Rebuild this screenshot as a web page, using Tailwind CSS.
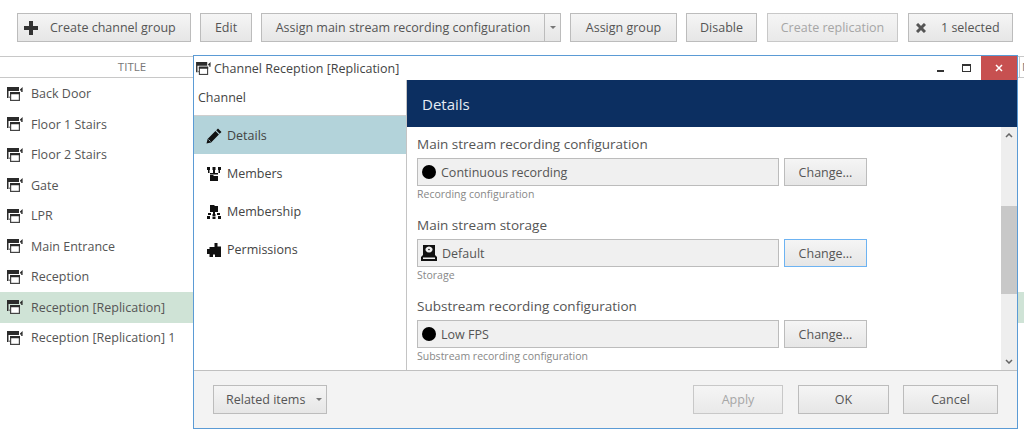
<!DOCTYPE html>
<html lang="en">
<head>
  <meta charset="UTF-8" />
  <title>Channel Reception [Replication]</title>
  <script src="https://cdn.jsdelivr.net/npm/@tailwindcss/browser@4"></script>
</head>
<body class="relative w-[1024px] h-[436px] overflow-hidden bg-white font-['Open_Sans',sans-serif] text-[12.500px] text-[#555]">
  <svg class="hidden">
    <symbol id="channel" viewBox="0 0 16 14">
      <path fill="#2b2b2b" d="M0 0h12v4H0zM0 4h1.500v7H0z" />
      <path fill="#888" d="M1.500 9.500h2v1.500h-2z" />
      <rect x="3.600" y="5.600" width="8.800" height="7.800" fill="#fff" stroke="#444" stroke-width="1.200" />
      <path fill="#2b2b2b" d="M3 5h10v2.200H3zM13 2.500L15.600 0v5h-1.400V3.200l-1.200.6z" />
    </symbol>
  </svg>

  <!-- Toolbar -->
  <div class="flex h-[56px] pt-[13px] pl-[17px]">
    <button class="flex items-center h-[29px] w-[174px] mr-[9px] border border-[#bcbcbc] bg-gradient-to-b from-[#f5f5f5] to-[#e6e6e6]">
      <svg class="ml-[6px] w-[14px] h-[14px]" viewBox="0 0 14 14"><path fill="#333" d="M5 0h4v5h5v4H9v5H5V9H0V5h5z" /></svg>
      <span class="ml-[12px] pt-[2px] whitespace-nowrap">Create channel group</span>
    </button>
    <button class="h-[29px] w-[52px] mr-[9px] pt-[2px] border border-[#bcbcbc] bg-gradient-to-b from-[#f5f5f5] to-[#e6e6e6]">Edit</button>
    <div class="flex h-[29px] w-[300px] mr-[9px] border border-[#bcbcbc] bg-gradient-to-b from-[#f5f5f5] to-[#e6e6e6]">
      <button class="w-[283px] pt-[2px] whitespace-nowrap border-r border-[#bcbcbc]">Assign main stream recording configuration</button>
      <span class="flex flex-1 items-center justify-center"><span class="border-x-[3px] border-t-[3px] border-x-transparent border-t-[#777]"></span></span>
    </div>
    <button class="h-[29px] w-[107px] mr-[9px] pt-[2px] border border-[#bcbcbc] bg-gradient-to-b from-[#f5f5f5] to-[#e6e6e6]">Assign group</button>
    <button class="h-[29px] w-[71px] mr-[10px] pt-[2px] border border-[#bcbcbc] bg-gradient-to-b from-[#f5f5f5] to-[#e6e6e6]">Disable</button>
    <button class="h-[29px] w-[131px] mr-[10px] pt-[2px] border border-[#c8c8c8] bg-gradient-to-b from-[#f5f5f5] to-[#e9e9e9] text-[#a6a6a6] whitespace-nowrap">Create replication</button>
    <button class="flex items-center h-[29px] w-[105px] border border-[#bcbcbc] bg-gradient-to-b from-[#f5f5f5] to-[#e6e6e6]">
      <svg class="ml-[7px] w-[10px] h-[10px]" viewBox="0 0 10 10"><path stroke="#555" stroke-width="3" d="M1 1l8 8M9 1l-8 8" /></svg>
      <span class="ml-[15px] pt-[2px] whitespace-nowrap">1 selected</span>
    </button>
  </div>

  <!-- Channel table -->
  <div class="flex h-[22px] border-y border-[#c8c8c8] text-[11.500px] text-[#777]">
    <div class="w-[264px] text-center leading-[20px]">TITLE</div>
  </div>
  <ul class="pt-[0.500px]">
    <li class="flex items-center h-[30.500px] pl-[7px]"><svg class="w-[16px] h-[14px] mr-[8px]"><use href="#channel" /></svg><span class="pt-[2px]">Back Door</span></li>
    <li class="flex items-center h-[30.500px] pl-[7px]"><svg class="w-[16px] h-[14px] mr-[8px]"><use href="#channel" /></svg><span class="pt-[2px]">Floor 1 Stairs</span></li>
    <li class="flex items-center h-[30.500px] pl-[7px]"><svg class="w-[16px] h-[14px] mr-[8px]"><use href="#channel" /></svg><span class="pt-[2px]">Floor 2 Stairs</span></li>
    <li class="flex items-center h-[30.500px] pl-[7px]"><svg class="w-[16px] h-[14px] mr-[8px]"><use href="#channel" /></svg><span class="pt-[2px]">Gate</span></li>
    <li class="flex items-center h-[30.500px] pl-[7px]"><svg class="w-[16px] h-[14px] mr-[8px]"><use href="#channel" /></svg><span class="pt-[2px]">LPR</span></li>
    <li class="flex items-center h-[30.500px] pl-[7px]"><svg class="w-[16px] h-[14px] mr-[8px]"><use href="#channel" /></svg><span class="pt-[2px]">Main Entrance</span></li>
    <li class="flex items-center h-[30.500px] pl-[7px]"><svg class="w-[16px] h-[14px] mr-[8px]"><use href="#channel" /></svg><span class="pt-[2px]">Reception</span></li>
    <li class="flex items-center h-[30.500px] pl-[7px] bg-[#cfe3d6]"><svg class="w-[16px] h-[14px] mr-[8px]"><use href="#channel" /></svg><span class="pt-[2px]">Reception [Replication]</span></li>
    <li class="flex items-center h-[30.500px] pl-[7px]"><svg class="w-[16px] h-[14px] mr-[8px]"><use href="#channel" /></svg><span class="pt-[2px]">Reception [Replication] 1</span></li>
  </ul>

  <!-- Dialog -->
  <div class="absolute left-[193px] top-[55px] flex flex-col w-[825px] h-[374px] border border-[#5b9bd5] bg-white">
    <div class="flex items-center h-[24px] shrink-0 pl-[2px]">
      <svg class="w-[15px] h-[13px]"><use href="#channel" /></svg>
      <span class="ml-[3px] pt-[2px] text-[12.500px] text-[#444]">Channel Reception [Replication]</span>
      <div class="ml-auto flex items-center h-full">
        <span class="w-[7px] h-[2px] mt-[5px] mr-[18px] bg-[#333]"></span>
        <span class="w-[9px] h-[8px] mr-[10px] border border-t-2 border-[#333]"></span>
        <span class="flex items-center justify-center w-[36px] h-full bg-[#c75050]">
          <svg class="w-[8px] h-[8px]" viewBox="0 0 8 8"><path stroke="#fff" stroke-width="1.500" d="M1 1l6 6M7 1L1 7" /></svg>
        </span>
      </div>
    </div>

    <div class="flex flex-1 min-h-0">
      <!-- Sidebar -->
      <nav class="w-[213px] shrink-0 border-r border-[#c4c4c4] text-[#444]">
        <div class="h-[36px] pl-[4px] leading-[36px] border-b border-[#cfcfcf]">Channel</div>
        <div class="flex items-center h-[38px] pl-[12px] pt-[1px] bg-[#b3d3da]">
          <svg class="w-[16px] h-[16px] mr-[5px]" viewBox="0 0 16 16"><path fill="#111" d="M12 .5l3.500 3.500-1.800 1.800-3.500-3.500zM9.400 3.100l3.500 3.500-7.800 7.800-4.600 1.100 1.100-4.600z" /><path stroke="#b3d3da" stroke-width=".8" d="M2.500 11.500l2 2" /></svg><span class="pt-[2px]">Details</span>
        </div>
        <div class="flex items-center h-[38px] pl-[12px] pt-[1px]">
          <svg class="w-[16px] h-[16px] mr-[5px]" viewBox="0 0 16 16"><path fill="#111" d="M1 1h3v3H1zM6.500 1h3v3h-3zM12 1h3v3h-3zM2 4h1.500v3H2zM7 4h2v3H7zM12.500 4H14v3h-1.500zM4 7h8v1.500h-8zM4 9h3l1 1h4v5H4z" /></svg><span class="pt-[2px]">Members</span>
        </div>
        <div class="flex items-center h-[38px] pl-[12px] pt-[1px]">
          <svg class="w-[16px] h-[16px] mr-[5px]" viewBox="0 0 16 16"><path fill="#111" d="M4 1h4l1 1h3v6H4zM7 8h2v2H7zM2 9h3v2H2zM11 9h3v2h-3zM6.500 10h3v2.500h-3zM1 12h3v3H1zM6.500 13h3v2h-3zM12 12h3v3h-3z" /></svg><span class="pt-[2px]">Membership</span>
        </div>
        <div class="flex items-center h-[38px] pl-[12px] pt-[1px]">
          <svg class="w-[16px] h-[16px] mr-[5px]" viewBox="0 0 16 16"><path fill="#111" d="M8.500 1h3v3.500H15V15H9v-2.500H7V15H3.500v-3H1V7h2.500V5H8.500z" /></svg><span class="pt-[2px]">Permissions</span>
        </div>
      </nav>

      <!-- Details pane -->
      <div class="flex flex-col flex-1 min-w-0">
        <div class="h-[47px] shrink-0 bg-[#0c2f61] pl-[15px] text-[15px] leading-[49px] text-[#e6ecf4]">Details</div>
        <div class="flex flex-1 min-h-0">
          <div class="flex-1 pl-[10px] pt-[7px]">
            <section class="h-[81px]">
              <div class="h-[24px] text-[13.500px] leading-[20px]">Main stream recording configuration</div>
              <div class="flex gap-[5px]">
                <div class="flex items-center w-[362px] h-[28px] pl-[4px] border border-[#bcbcbc] bg-[#f0f0f0]"><span class="w-[14px] h-[14px] mr-[5px] rounded-full bg-black"></span><span class="pt-[2px]">Continuous recording</span></div>
                <button class="w-[83px] h-[28px] pt-[2px] border border-[#bcbcbc] bg-gradient-to-b from-[#f5f5f5] to-[#e6e6e6]">Change...</button>
              </div>
              <div class="text-[10.500px] leading-[16px] text-[#888]">Recording configuration</div>
            </section>
            <section class="h-[81px]">
              <div class="h-[24px] text-[13.500px] leading-[20px]">Main stream storage</div>
              <div class="flex gap-[5px]">
                <div class="flex items-center w-[362px] h-[28px] pl-[3px] border border-[#bcbcbc] bg-[#f0f0f0]">
                  <svg class="w-[16px] h-[16px] mr-[5px]" viewBox="0 0 16 16"><path fill="#111" fill-rule="evenodd" d="M2 0h12v10l2 2v4H0v-4l2-2zM8 1.500a3.500 3 0 1 0 .01 0zM8 3.800a.8.700 0 1 1-.01 0zM2 12.500v1.500h12v-1.500z" /></svg><span class="pt-[2px]">Default</span>
                </div>
                <button class="w-[83px] h-[28px] pt-[2px] border border-[#6db3f2] bg-gradient-to-b from-[#f5f5f5] to-[#e6e6e6]">Change...</button>
              </div>
              <div class="text-[10.500px] leading-[16px] text-[#888]">Storage</div>
            </section>
            <section class="h-[81px]">
              <div class="h-[24px] text-[13.500px] leading-[20px]">Substream recording configuration</div>
              <div class="flex gap-[5px]">
                <div class="flex items-center w-[362px] h-[28px] pl-[4px] border border-[#bcbcbc] bg-[#f0f0f0]"><span class="w-[14px] h-[14px] mr-[5px] rounded-full bg-black"></span><span class="pt-[2px]">Low FPS</span></div>
                <button class="w-[83px] h-[28px] pt-[2px] border border-[#bcbcbc] bg-gradient-to-b from-[#f5f5f5] to-[#e6e6e6]">Change...</button>
              </div>
              <div class="text-[10.500px] leading-[16px] text-[#888]">Substream recording configuration</div>
            </section>
          </div>
          <!-- Scrollbar -->
          <div class="flex flex-col items-center w-[16px] shrink-0 bg-[#eeeeee]">
            <svg class="mt-[6px] w-[8px] h-[5px]" viewBox="0 0 8 5"><path fill="none" stroke="#666" stroke-width="1.500" d="M1 4l3-3 3 3" /></svg>
            <div class="mt-[68px] w-full h-[88px] bg-[#c8c8c8]"></div>
            <svg class="mt-auto mb-[6px] w-[8px] h-[5px]" viewBox="0 0 8 5"><path fill="none" stroke="#666" stroke-width="1.500" d="M1 1l3 3 3-3" /></svg>
          </div>
        </div>
      </div>
    </div>

    <!-- Footer -->
    <div class="flex items-center h-[58px] shrink-0 pl-[19px] pr-[19px] border-t border-[#c0c0c0] bg-[#f3f3f3]">
      <button class="flex items-center w-[114px] h-[29px] pl-[12px] border border-[#bcbcbc] bg-gradient-to-b from-[#f5f5f5] to-[#e6e6e6]">
        <span class="pt-[2px]">Related items</span><span class="ml-[11px] border-x-[3px] border-t-[3px] border-x-transparent border-t-[#777]"></span>
      </button>
      <button class="ml-auto w-[90px] h-[29px] pt-[2px] border border-[#c8c8c8] bg-gradient-to-b from-[#f5f5f5] to-[#e9e9e9] text-[#a6a6a6]">Apply</button>
      <button class="ml-[15px] w-[91px] h-[29px] pt-[2px] border border-[#bcbcbc] bg-gradient-to-b from-[#f5f5f5] to-[#e6e6e6]">OK</button>
      <button class="ml-[14px] w-[95px] h-[29px] pt-[2px] border border-[#bcbcbc] bg-gradient-to-b from-[#f5f5f5] to-[#e6e6e6]">Cancel</button>
    </div>
  </div>

  <!-- Next column header peeking out beside the dialog -->
  <div class="absolute left-[1019px] top-[57px] h-[20px] pl-[2px] border-l border-[#c8c8c8] text-[11.500px] leading-[20px] text-[#777]">N</div>
</body>
</html>
